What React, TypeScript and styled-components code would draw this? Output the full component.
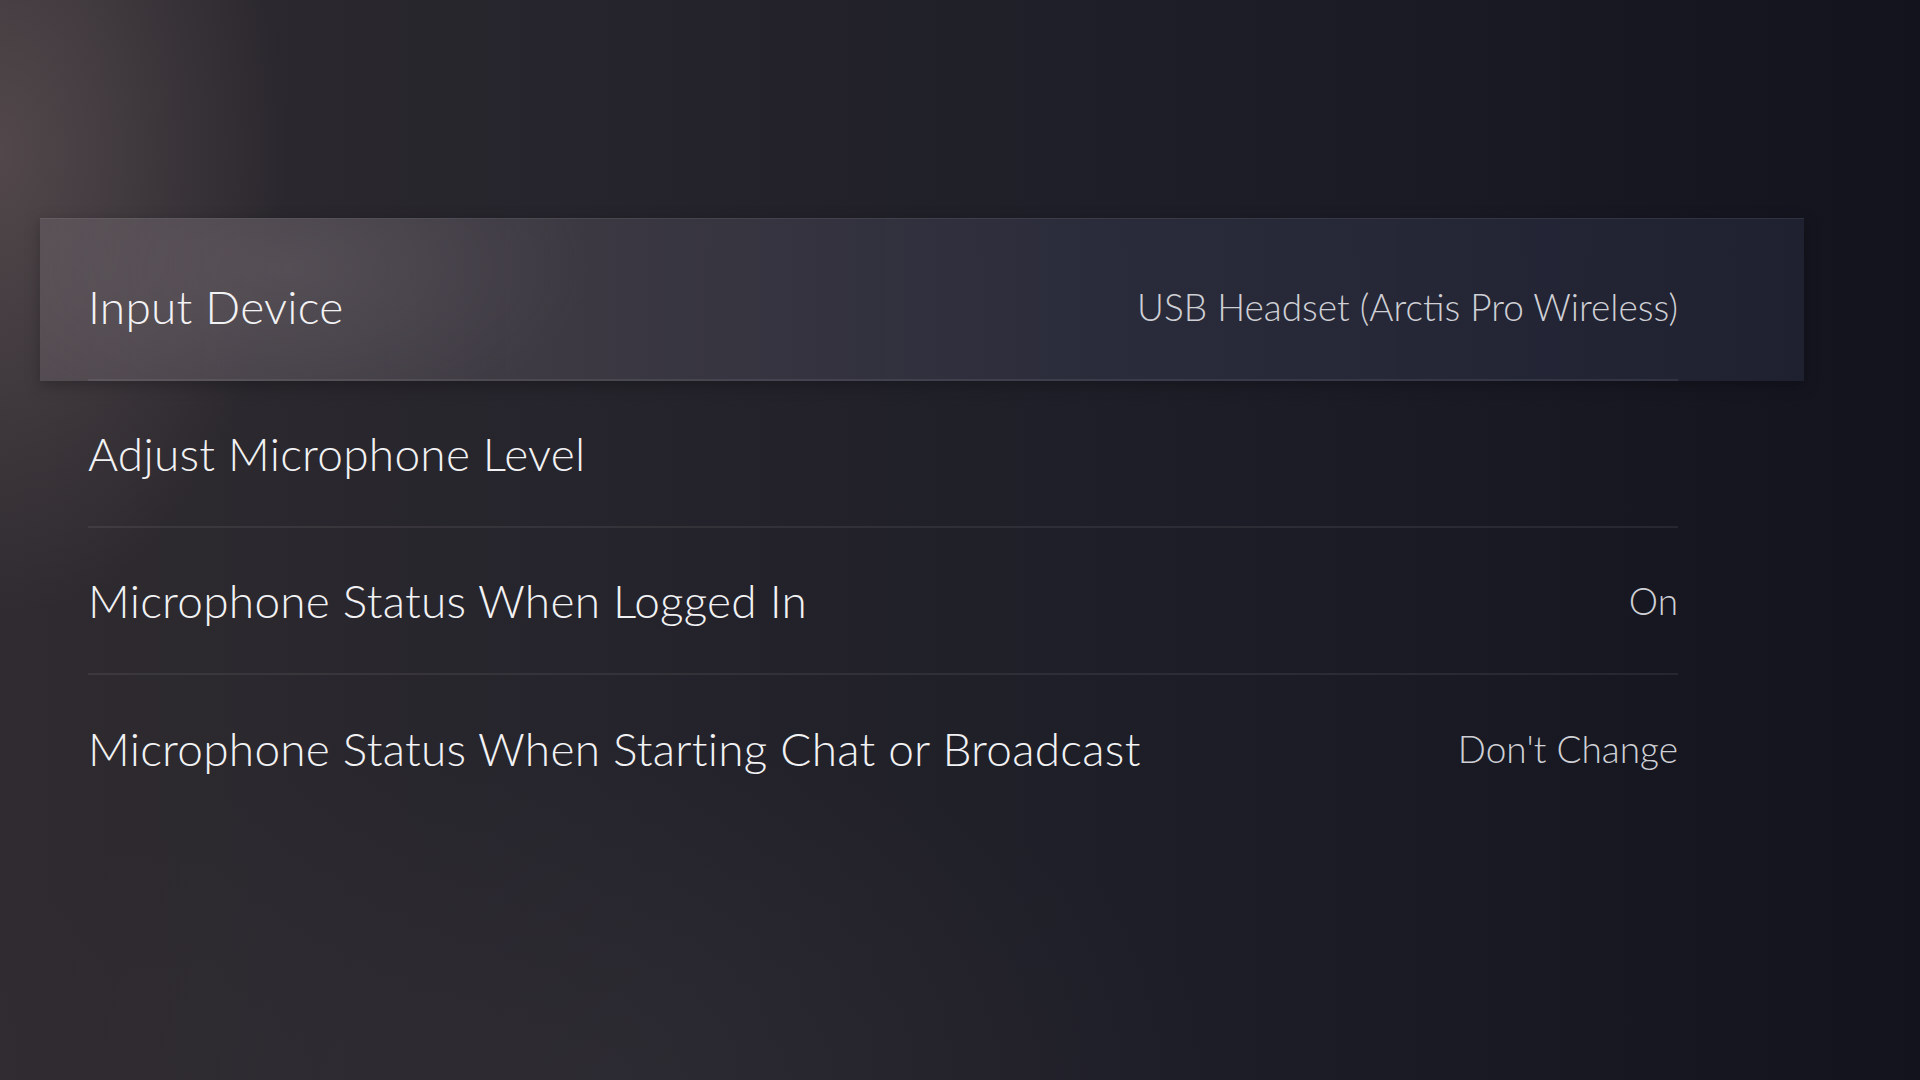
import React from 'react';
import styled, { createGlobalStyle, css } from 'styled-components';

interface SettingItem {
  label: string;
  value?: string;
}

const items: SettingItem[] = [
  { label: 'Input Device', value: 'USB Headset (Arctis Pro Wireless)' },
  { label: 'Adjust Microphone Level' },
  { label: 'Microphone Status When Logged In', value: 'On' },
  { label: 'Microphone Status When Starting Chat or Broadcast', value: "Don't Change" },
];

const GlobalStyle = createGlobalStyle`
  html, body {
    margin: 0;
    padding: 0;
    background: #15161f;
  }
  body {
    font-family: Lato, "Open Sans", "Liberation Sans", sans-serif;
    -webkit-font-smoothing: antialiased;
  }
`;

const Screen = styled.div`
  width: 1920px;
  height: 1080px;
  overflow: hidden;
  background:
    radial-gradient(ellipse 380px 620px at 0% 14%, rgba(130, 112, 112, 0.42), rgba(130, 112, 112, 0) 75%),
    radial-gradient(ellipse 800px 420px at 30% 100%, rgba(62, 58, 64, 0.3), rgba(62, 58, 64, 0) 80%),
    linear-gradient(90deg, #2f2b30 0%, #28262d 22%, #202029 50%, #191a24 75%, #12131c 100%);
`;

const List = styled.div`
  width: 1590px;
  margin-left: 88px;
  padding-top: 234px;
  display: flex;
  flex-direction: column;
`;

const Row = styled.div<{ $selected?: boolean }>`
  position: relative;
  height: 147px;
  display: flex;
  align-items: center;
  justify-content: space-between;
  box-sizing: border-box;

  &:not(:last-child) {
    border-bottom: 2px solid ${p => (p.$selected ? 'rgba(255, 255, 255, 0.14)' : 'rgba(255, 255, 255, 0.07)')};
  }

  ${p =>
    p.$selected &&
    css`
      &::before {
        content: '';
        position: absolute;
        left: -48px;
        right: -126px;
        top: -16px;
        bottom: -2px;
        border-top: 1px solid rgba(255, 255, 255, 0.08);
        background:
          radial-gradient(ellipse 380px 200px at 14% 30%, rgba(150, 135, 140, 0.2), rgba(150, 135, 140, 0) 80%),
          linear-gradient(90deg, rgba(100, 92, 98, 0.55) 0%, rgba(85, 80, 90, 0.5) 25%, rgba(58, 60, 82, 0.45) 60%, rgba(42, 45, 66, 0.5) 100%);
        box-shadow: 0 4px 14px rgba(0, 0, 0, 0.25);
        z-index: 0;
      }
    `}
`;

const Label = styled.span`
  position: relative;
  z-index: 1;
  font-size: 46px;
  font-weight: 300;
  letter-spacing: 0.25px;
  color: #f2f2f4;
  white-space: nowrap;
`;

const Value = styled.span`
  position: relative;
  z-index: 1;
  font-size: 37px;
  font-weight: 300;
  color: #cfd0d5;
  white-space: nowrap;
`;

const App: React.FC = () => {
  return (
    <>
      <GlobalStyle />
      <Screen>
        <List>
          {items.map((item, i) => (
            <Row key={item.label} $selected={i === 0}>
              <Label>{item.label}</Label>
              {item.value && <Value>{item.value}</Value>}
            </Row>
          ))}
        </List>
      </Screen>
    </>
  );
};

export default App;
